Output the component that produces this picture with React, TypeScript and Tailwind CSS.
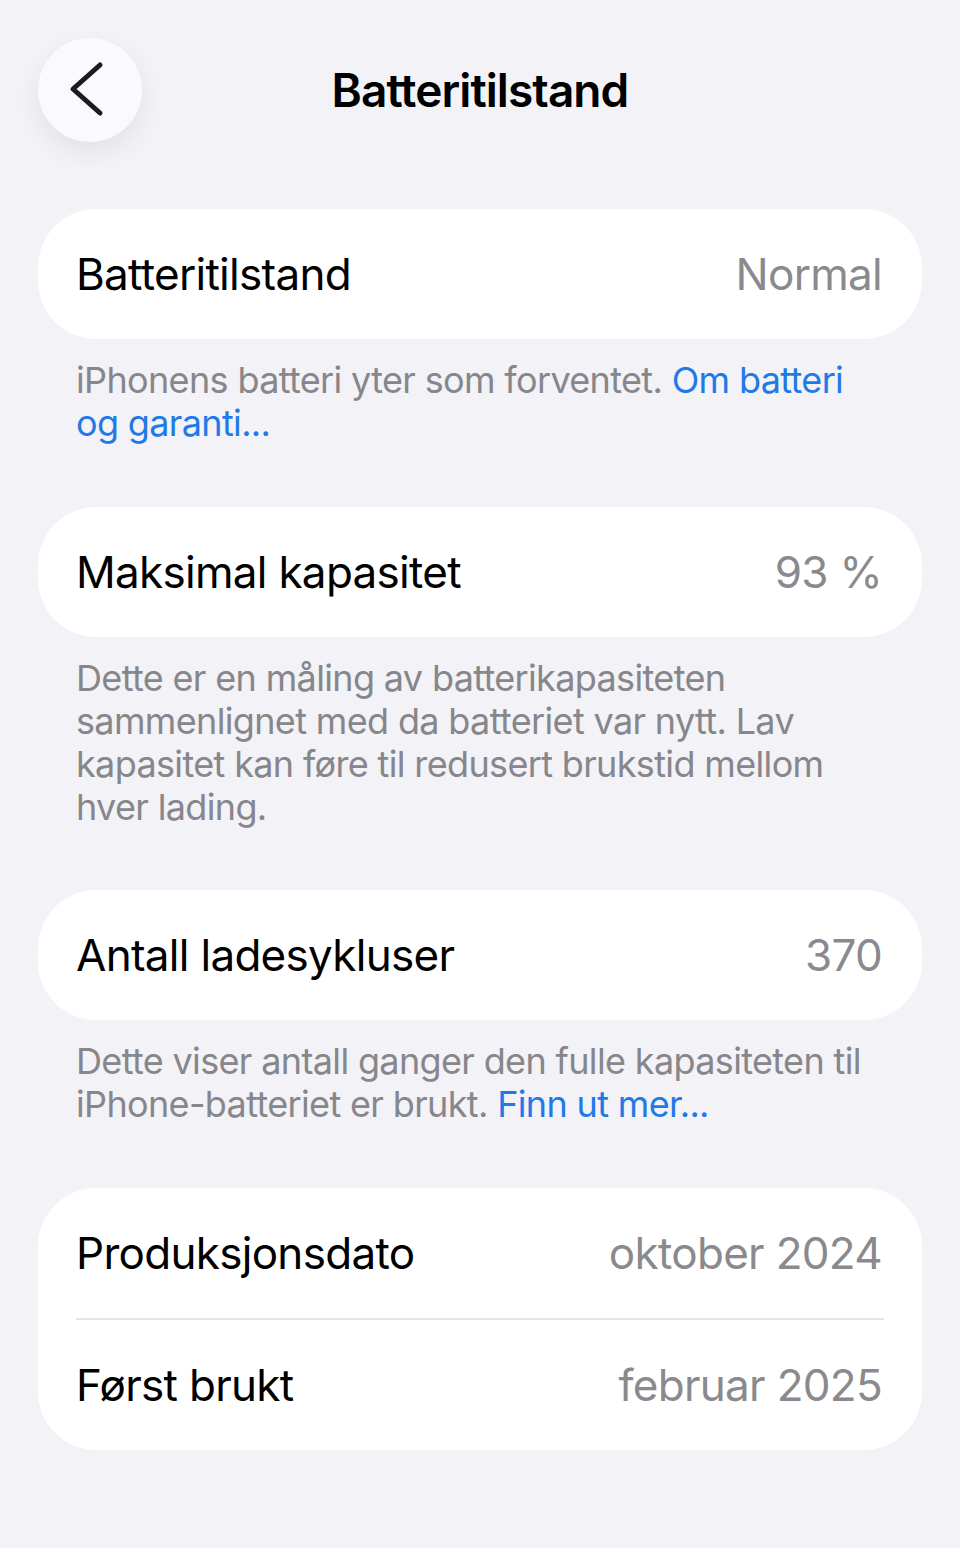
const font = { fontFamily: "Inter, 'Noto Sans', sans-serif" };

function Row({ label, value }: { label: string; value: string }) {
  return (
    <div className="flex h-[130px] items-center justify-between pl-[38px] pr-[40px]">
      <span className="text-[44px] tracking-[-0.016em] text-[#000]">{label}</span>
      <span className="text-[44px] tracking-[-0.016em] text-[#8a8a8e]">{value}</span>
    </div>
  );
}

function Card({ children }: { children: React.ReactNode }) {
  return <div className="rounded-[58px] bg-white">{children}</div>;
}

function Note({ children }: { children: React.ReactNode }) {
  return (
    <p className="mt-[20px] px-[38px] text-[36px] leading-[43px] tracking-[-0.018em] text-[#86868b]">
      {children}
    </p>
  );
}

export default function App() {
  return (
    <div className="min-h-[1548px] bg-[#f2f2f7] px-[38px] pt-[38px]" style={font}>
      <header className="grid grid-cols-[104px_1fr_104px] items-center">
        <button className="flex h-[104px] w-[104px] items-center justify-center rounded-full bg-[#fafafc] shadow-[0_10px_28px_rgba(0,0,0,0.07)]">
          <svg width="104" height="104" viewBox="0 0 104 104" fill="none">
            <path
              d="M62 27 L35 51 L62 75"
              stroke="#1c1c1e"
              strokeWidth="5"
              strokeLinecap="round"
              strokeLinejoin="round"
            />
          </svg>
        </button>
        <h1 className="text-center text-[46px] font-semibold tracking-[-0.02em] text-black">
          Batteritilstand
        </h1>
        <div />
      </header>

      <section className="mt-[67px]">
        <Card>
          <Row label="Batteritilstand" value="Normal" />
        </Card>
        <Note>
          iPhonens batteri yter som forventet.{" "}
          <span className="text-[#1f7ae8]">Om batteri og garanti...</span>
        </Note>
      </section>

      <section className="mt-[62px]">
        <Card>
          <Row label="Maksimal kapasitet" value="93 %" />
        </Card>
        <Note>
          Dette er en måling av batterikapasiteten sammenlignet med da batteriet var nytt. Lav
          kapasitet kan føre til redusert brukstid mellom hver lading.
        </Note>
      </section>

      <section className="mt-[61px]">
        <Card>
          <Row label="Antall ladesykluser" value="370" />
        </Card>
        <Note>
          Dette viser antall ganger den fulle kapasiteten til iPhone-batteriet er brukt.{" "}
          <span className="text-[#1f7ae8]">Finn ut mer...</span>
        </Note>
      </section>

      <section className="mt-[62px]">
        <Card>
          <Row label="Produksjonsdato" value="oktober 2024" />
          <div className="mx-[38px] h-[2px] bg-[#e3e3e8]" />
          <Row label="Først brukt" value="februar 2025" />
        </Card>
      </section>
    </div>
  );
}
